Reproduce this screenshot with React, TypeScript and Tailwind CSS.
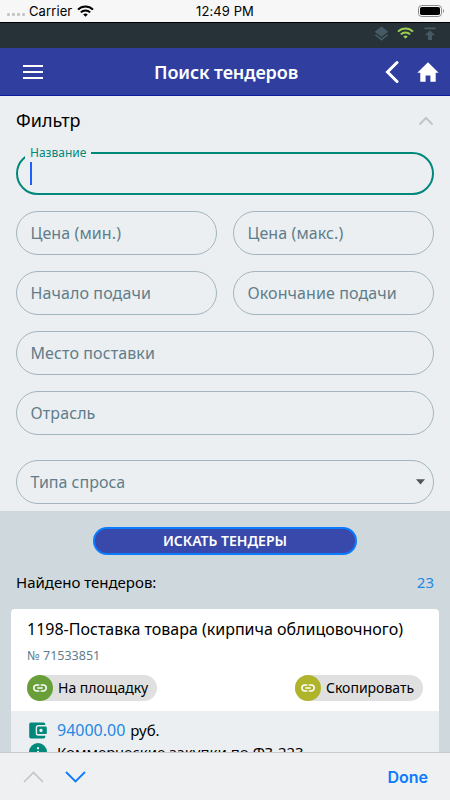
import type { ReactNode } from "react";
import clsx from "clsx";

const fields = [
  { label: "Цена (мин.)", className: "tracking-[0.1px]" },
  { label: "Цена (макс.)", className: "tracking-[0.1px]" },
  { label: "Начало подачи", className: "tracking-[0.1px]" },
  { label: "Окончание подачи", className: "tracking-[0.1px]" },
  { label: "Место поставки", className: "col-span-2 tracking-[0.1px]" },
  { label: "Отрасль", className: "col-span-2 tracking-[0.1px]" },
];

export default function App() {
  return (
    <div className="flex h-[800px] w-[450px] flex-col overflow-hidden bg-[#cfd8dc] font-['Noto_Sans',sans-serif] text-black">
      <StatusBar />
      <ServiceBar />
      <Header />
      <main className="flex min-h-0 flex-1 flex-col overflow-hidden">
        <Filter />
        <Results />
      </main>
      <KeyboardToolbar />
    </div>
  );
}

function StatusBar() {
  return (
    <div className="grid h-[22px] shrink-0 grid-cols-3 items-center bg-[#f7f7f7] font-[Inter,sans-serif] text-[13px] leading-none">
      <div className="flex items-center pl-[7px]">
        <span className="mt-[7px] flex gap-[2px]">
          {[0, 1, 2, 3].map((dot) => (
            <span key={dot} className="h-[3px] w-[3px] rounded-[1px] bg-[#c4c4c4]" />
          ))}
        </span>
        <span className="ml-[4px] tracking-[0.1px]">Carrier</span>
        <WifiIcon className="ml-[5px] h-[12px] w-[17px] text-black" />
      </div>
      <span className="text-center tracking-[0.1px]">12:49 PM</span>
      <div className="flex justify-end pr-[5px]">
        <svg width="27" height="12" viewBox="0 0 27 12">
          <rect x="0.5" y="0.5" width="23" height="11" rx="3.2" fill="none" stroke="#8a8a8a" />
          <rect x="2" y="2" width="20" height="8" rx="1.8" />
          <path d="M25 4v4c1.3-.6 1.3-3.4 0-4z" fill="#8a8a8a" />
        </svg>
      </div>
    </div>
  );
}

function ServiceBar() {
  return (
    <div className="flex h-[26px] shrink-0 items-start justify-end border-t border-black bg-[#263238] pr-[14px] pt-[3px]">
      <svg width="15" height="15" viewBox="0 0 15 15" fill="#455a64">
        <path d="M7.5 0.5 14.3 5.8 7.5 11.1 0.7 5.8z" />
        <path d="m0.7 9.3 1.3-1 5.5 4.3 5.5-4.3 1.3 1-6.8 5.4z" />
      </svg>
      <WifiIcon className="ml-[8px] mt-[1px] h-[12px] w-[17px] text-[#9ccc52]" />
      <svg className="ml-[10px] mt-[1px]" width="12" height="14" viewBox="0 0 12 14" fill="#455a64">
        <path d="M0.5 0.5h11v1.7H0.5zM6 3.3l5 5H8v4.7H4V8.3H1z" />
      </svg>
    </div>
  );
}

function WifiIcon({ className }: { className: string }) {
  return (
    <svg className={className} viewBox="0 0 17 12" fill="none" stroke="currentColor" strokeWidth="2">
      <path d="M1 4.6a10.6 10.6 0 0 1 15 0" />
      <path d="M3.8 7.4a6.6 6.6 0 0 1 9.4 0" />
      <path d="M8.5 11.8 6.2 9.5a3.3 3.3 0 0 1 4.6 0z" fill="currentColor" stroke="none" />
    </svg>
  );
}

function Header() {
  return (
    <header className="flex h-[48px] shrink-0 items-center border-b border-[#0a1ba0] bg-[#303f9f] pl-[23px] pr-[11px] text-white">
      <button aria-label="Меню" className="flex w-[20px] flex-col gap-[4px]">
        <span className="h-[2px] bg-white" />
        <span className="h-[2px] bg-white" />
        <span className="h-[2px] bg-white" />
      </button>
      <h1 className="flex-1 pl-[111px] text-[18px] font-semibold leading-none tracking-[-0.1px] whitespace-nowrap">
        Поиск тендеров
      </h1>
      <svg width="14" height="24" viewBox="0 0 14 24" fill="none" stroke="white" strokeWidth="3" strokeLinecap="round">
        <path d="M12 2.5 2.5 12 12 21.5" />
      </svg>
      <svg className="ml-[18px] mt-[1px]" width="22" height="20" viewBox="0 0 22 20" fill="white">
        <path d="M11 0.3 21.7 10.8h-3v8.9h-5.3v-6.3H8.6v6.3H3.3v-8.9h-3z" />
      </svg>
    </header>
  );
}

function Filter() {
  return (
    <section className="h-[415px] shrink-0 bg-[#eceff1] px-[16px]">
      <div className="flex h-[48px] items-center justify-between">
        <h2 className="text-[18px] leading-none">Фильтр</h2>
        <svg className="mt-[1px]" width="16" height="10" viewBox="0 0 16 10" fill="none" stroke="#c2c5c7" strokeWidth="2">
          <path d="M1.5 8.5 8 2l6.5 6.5" />
        </svg>
      </div>

      {/* Active field with a floating label over its border */}
      <div className="relative mt-[8px] flex h-[43px] items-center rounded-full border-2 border-[#00897b] pl-[11.5px]">
        <span className="absolute -top-[9px] left-[7px] bg-[#eceff1] pl-[5px] pr-[5px] text-[12px] leading-[16px] text-[#00897b]">
          Название
        </span>
        <span className="h-[23px] w-[2px] bg-[#1f5eff]" />
      </div>

      <div className="mt-[16px] grid grid-cols-2 gap-4">
        {fields.map((field) => (
          <Field key={field.label} className={field.className}>
            {field.label}
          </Field>
        ))}
      </div>

      <Field className="mt-[25px] justify-between pr-[8px]">
        Типа спроса
        <svg width="9" height="6" viewBox="0 0 9 6" fill="#555">
          <path d="M0 0.3h9L4.5 5.6z" />
        </svg>
      </Field>
    </section>
  );
}

function Field({ children, className }: { children: ReactNode; className?: string }) {
  return (
    <div
      className={clsx(
        "flex h-[44px] items-center rounded-full border border-[#a3b5be] pl-[13.5px] text-[16px] leading-none whitespace-nowrap text-[#607d8b]",
        className
      )}
    >
      {children}
    </div>
  );
}

function Results() {
  return (
    <section className="flex-1 pt-[16px]">
      <button className="mx-auto flex h-[28px] w-[264px] items-center justify-center rounded-full border-2 border-[#0a7cff] bg-[#3949ab] text-[14px] font-semibold leading-none text-white">
        ИСКАТЬ ТЕНДЕРЫ
      </button>
      <div className="mt-[17px] flex h-[20px] items-center justify-between px-[16px] text-[15px] leading-none">
        <span>Найдено тендеров:</span>
        <span className="text-[#1e88e5]">23</span>
      </div>

      <article className="mx-[11px] mt-[17px] rounded-t bg-white">
        <div className="h-[102px] px-[16px] pt-[10px]">
          <h3 className="text-[16px] leading-[20px] whitespace-nowrap">
            1198-Поставка товара (кирпича облицовочного)
          </h3>
          <p className="mt-[9px] text-[12.5px] leading-[16px] text-[#607d8b]">№ 71533851</p>
          <div className="mt-[11px] flex justify-between">
            <Chip label="На площадку" color="bg-[#689f38]" className="w-[130px]" />
            <Chip label="Скопировать" color="bg-[#afb42b]" className="w-[128px]" />
          </div>
        </div>
        <div className="bg-[#eceff1] pl-[18px] pt-[9px]">
          <div className="flex h-[20px] items-center text-[16px] leading-none">
            <svg className="mr-[10px] mt-[1px]" width="18" height="17" viewBox="0 0 18 17">
              <path d="M2 0.5h12.5q1.8 0 1.8 1.8V3H9.5Q6.7 3 6.7 5.5v5.8q0 2.5 2.8 2.5h6.8v1q0 1.7-1.8 1.7H2Q.2 16.5.2 14.7V2.3Q.2.5 2 .5z" fill="#00897b" />
              <path fillRule="evenodd" d="M9.3 4.6h7.2q1.3 0 1.3 1.2v5.1q0 1.2-1.3 1.2H9.3Q8.1 12.100 8.1 10.900V5.800Q8.1 4.600 9.300 4.600zM12 6.7a1.700 1.700 0 1 0 .01 0z" fill="#00897b" />
            </svg>
            <span className="text-[#1e88e5]">94000.00</span>
            <span className="ml-[5px] text-[15px]">руб.</span>
          </div>
          <div className="mt-[2px] flex h-[20px] items-center text-[15px] leading-none">
            <svg className="mr-[10px]" width="18" height="18" viewBox="0 0 18 18">
              <circle cx="9" cy="9" r="9" fill="#00897b" />
              <path d="M8 4.200h2v2H8zM8 8h2v5.500H8z" fill="white" />
            </svg>
            <span>Коммерческие закупки по ФЗ-223</span>
          </div>
        </div>
      </article>
    </section>
  );
}

function Chip({ label, color, className }: { label: string; color: string; className: string }) {
  return (
    <div className={clsx("flex h-[26px] items-center rounded-full bg-[#e0e0e0]", className)}>
      <span className={clsx("mr-[5px] flex h-[26px] w-[26px] shrink-0 items-center justify-center rounded-full", color)}>
        <svg width="14" height="8" viewBox="0 0 14 8" fill="none" stroke="white" strokeWidth="1.500">
          <path d="M6.300 1H3.800a3 3 0 0 0 0 6h2.500M7.700 1h2.500a3 3 0 0 1 0 6H7.700M4.300 4h5.400" />
        </svg>
      </span>
      <span className="text-[14px] leading-none whitespace-nowrap">{label}</span>
    </div>
  );
}

function KeyboardToolbar() {
  return (
    <div className="flex h-[48px] shrink-0 items-center border-t border-[#c8cacd] bg-[#eff0f2] pl-[23px] pr-[22px]">
      <svg width="21" height="12" viewBox="0 0 21 12" fill="none" stroke="#c3c5c8" strokeWidth="1.600">
        <path d="M1 11 10.500 1.500 20 11" />
      </svg>
      <svg className="ml-[21px]" width="21" height="12" viewBox="0 0 21 12" fill="none" stroke="#0a7aff" strokeWidth="1.800">
        <path d="M1 1 10.500 10.500 20 1" />
      </svg>
      <span className="ml-auto font-[Inter,sans-serif] text-[16px] font-semibold leading-none text-[#0a7aff]">Done</span>
    </div>
  );
}
